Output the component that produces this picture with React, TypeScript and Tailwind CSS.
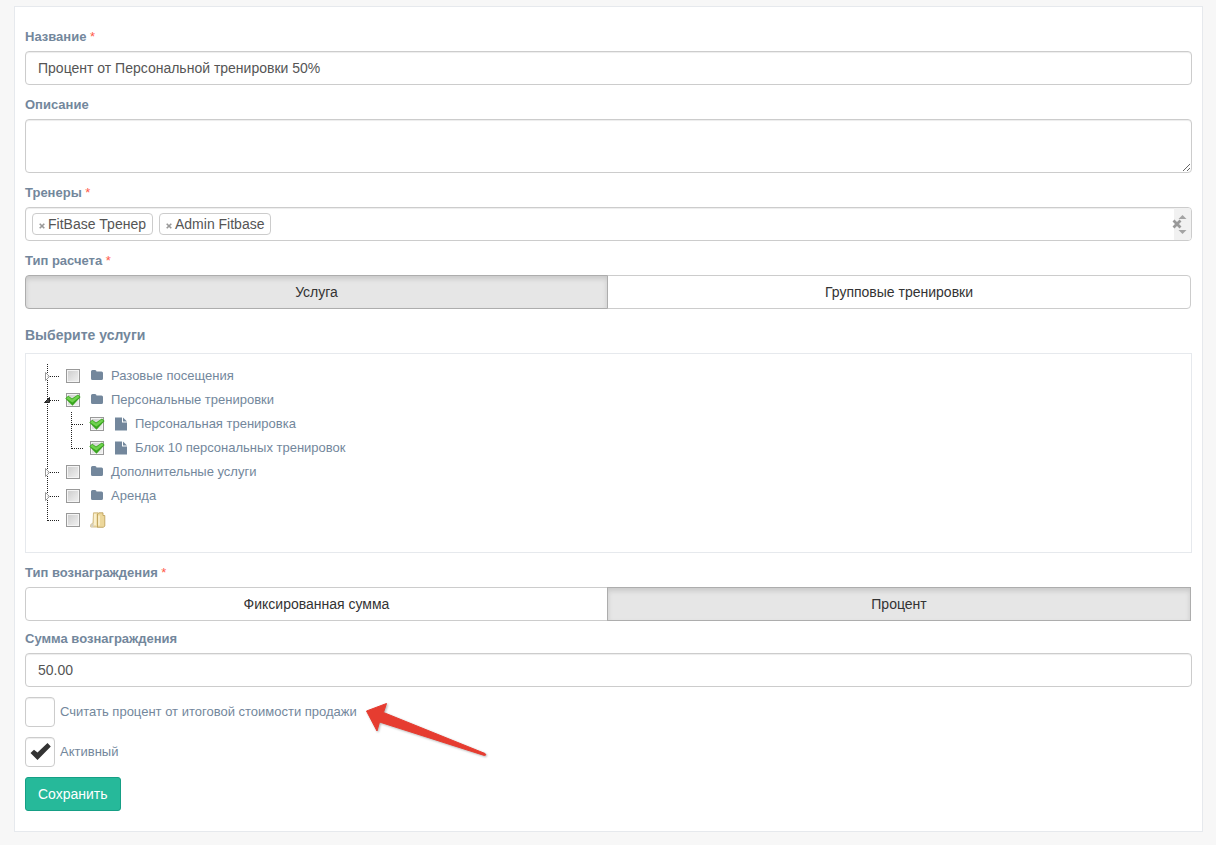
import React, { useState } from 'react';
import clsx from 'clsx';

type TreeNode = {
  id: string;
  title: string;
  icon: 'folder' | 'file' | 'folders';
  checked?: boolean;
  children?: TreeNode[];
  lazy?: boolean;
};

const services: TreeNode[] = [
  { id: 's1', title: 'Разовые посещения', icon: 'folder', lazy: true },
  {
    id: 's2',
    title: 'Персональные тренировки',
    icon: 'folder',
    checked: true,
    children: [
      { id: 's3', title: 'Персональная тренировка', icon: 'file', checked: true },
      { id: 's4', title: 'Блок 10 персональных тренировок', icon: 'file', checked: true },
    ],
  },
  { id: 's5', title: 'Дополнительные услуги', icon: 'folder', lazy: true },
  { id: 's6', title: 'Аренда', icon: 'folder', lazy: true },
  { id: 's7', title: '', icon: 'folders' },
];

const control =
  'block w-full rounded-[4px] border border-[#ccc] bg-white px-3 text-sm text-[#555] shadow-[inset_0_1px_1px_rgba(0,0,0,0.075)] outline-none';

const Label = ({ htmlFor, required, children }: { htmlFor?: string; required?: boolean; children: React.ReactNode }) => (
  <label htmlFor={htmlFor} className="mb-[5px] block text-[13px] leading-[19px] font-bold">
    {children}
    {required && <span className="font-normal text-[#ff5a4a]"> *</span>}
  </label>
);

const Toggle = ({ name, options, initial }: { name: string; options: string[]; initial: number }) => {
  const [active, setActive] = useState(initial);
  return (
    <div role="group" aria-label={name} className="mr-px flex">
      {options.map((option, i) => (
        <button
          key={option}
          type="button"
          aria-pressed={active === i}
          onClick={() => setActive(i)}
          className={clsx(
            'h-[34px] border text-sm text-[#333]',
            i === 0 ? 'w-1/2 rounded-l-[4px]' : '-ml-px flex-1',
            i === 1 && active !== i && 'rounded-r-[4px]',
            active === i
              ? 'relative border-[#adadad] bg-[#e6e6e6] shadow-[inset_0_3px_5px_rgba(0,0,0,0.125)]'
              : 'border-[#ccc] bg-white'
          )}
        >
          {option}
        </button>
      ))}
    </div>
  );
};

const Connector = ({ last, open, lazy }: { last: boolean; open: boolean; lazy?: boolean }) => (
  <svg width="24" height="24" viewBox="0 0 24 24" className="shrink-0" aria-hidden="true">
    <g stroke="#222" strokeDasharray="1 1" shapeRendering="crispEdges">
      <path d={last ? 'M11.5 0V13' : 'M11.5 0V24'} />
      <path d="M12 12.5H24" />
    </g>
    {lazy && <path d="M9.5 8.5V16.5L13.5 12.5Z" fill="#fff" fillOpacity=".8" stroke="#999" />}
    {open && <path d="M8.5 14.5H13.5V9.5Z" fill="#444" stroke="#222" />}
  </svg>
);

const NodeIcon = ({ icon }: { icon: TreeNode['icon'] }) => {
  if (icon === 'folder') {
    return (
      <svg width="14" height="14" viewBox="0 0 14 14" aria-hidden="true">
        <path d="M1 2.5Q1 1 2.500 1H5Q6.500 1 6.500 2.500H11.500Q13 2.500 13 4V9.500Q13 11 11.500 11H2.500Q1 11 1 9.500Z" fill="#73879c" />
      </svg>
    );
  }
  if (icon === 'file') {
    return (
      <svg width="14" height="14" viewBox="0 0 14 14" aria-hidden="true">
        <path d="M1 .5H8V5.500H13V13.500H1ZM9 .5L13 4.500H9Z" fill="#73879c" />
      </svg>
    );
  }
  return (
    <svg width="16" height="16" viewBox="0 0 16 16" aria-hidden="true">
      <path d="M3.500 .8H8V15H.8V12.500L3 11Z" fill="#f1e0ae" stroke="#c9b071" strokeWidth=".8" />
      <path d="M1 12.500L3.500 11V15H1Z" fill="#d5cfbf" />
      <path d="M7.500 2L9 .8H13V3.500H14.800V14L13.500 15.300H7.500Z" fill="#ecd79b" stroke="#b99a50" strokeWidth=".8" />
      <path d="M5 2V13M9 3.500V13.500" stroke="#fff8df" strokeWidth="1.200" />
    </svg>
  );
};

const TreeItem = ({ node, last }: { node: TreeNode; last: boolean }) => {
  const [checked, setChecked] = useState(!!node.checked);
  return (
    <li>
      <div className="flex h-6 items-center">
        <Connector last={last} open={!!node.children} lazy={node.lazy} />
        <label className="flex h-6 items-center pl-[6px]">
          <span className="relative size-[14px]">
            <input
              type="checkbox"
              aria-label={node.title || 'Без названия'}
              checked={checked}
              onChange={() => setChecked(!checked)}
              className="block size-[14px] appearance-none border border-[#999] bg-linear-to-br from-[#ccc] to-[#f2f2f2] shadow-[inset_0_0_0_1px_#f4f4f4]"
            />
            {checked && (
              <svg width="16" height="14" viewBox="0 0 16 14" className="pointer-events-none absolute top-0 -left-px" aria-hidden="true">
                <path d="M.3 5.500L3.200 2.800L7 5.600L13 1.500L15.600 4L7.500 12.800Z" fill="#3aa51f" />
                <path d="M1.300 5.500L3.300 3.600L7 6.600L13 2.300L14.400 4L7.400 9.600Z" fill="#6fd24e" />
              </svg>
            )}
          </span>
          <span className="ml-[10px] w-[21px]">
            <NodeIcon icon={node.icon} />
          </span>
          <span>{node.title}</span>
        </label>
      </div>
      {node.children && (
        <ul className="bg-[repeating-linear-gradient(to_bottom,#222_0_1px,transparent_1px_2px)] bg-[length:1px_100%] bg-[position:11px_0] bg-no-repeat pl-6">
          {node.children.map((child, i) => (
            <TreeItem key={child.id} node={child} last={i === node.children!.length - 1} />
          ))}
        </ul>
      )}
    </li>
  );
};

const CheckField = ({ label, initial }: { label: string; initial: boolean }) => {
  const [checked, setChecked] = useState(initial);
  return (
    <label className="flex w-fit items-center gap-[5px]">
      <span className="relative size-[30px]">
        <input
          type="checkbox"
          checked={checked}
          onChange={() => setChecked(!checked)}
          className="block size-[30px] appearance-none rounded-[4px] border border-[#ccc] bg-white shadow-[inset_0_1px_1px_rgba(0,0,0,0.075)]"
        />
        {checked && (
          <svg width="30" height="30" viewBox="0 0 30 30" className="pointer-events-none absolute inset-0" aria-hidden="true">
            <path d="M5.500 16L9 12.800L12.500 15.500L22.500 6L25.800 9.500L12.500 23Z" fill="#333" />
          </svg>
        )}
      </span>
      <span>{label}</span>
    </label>
  );
};

const App = () => {
  const [trainers, setTrainers] = useState(['FitBase Тренер', 'Admin Fitbase']);

  return (
    <div className="min-h-screen bg-[#f7f7f7] pt-[6px] pr-[13px] pb-[13px] pl-[14px] font-['Liberation_Sans',Arial,sans-serif] text-[13px] leading-[18px] text-[#73879c]">
      <form
        onSubmit={(e) => e.preventDefault()}
        className="flex flex-col border border-[#e6e9ed] bg-white px-[10px] py-5"
      >
        <div className="mb-[10px]">
          <Label htmlFor="name" required>Название</Label>
          <input id="name" type="text" defaultValue="Процент от Персональной тренировки 50%" className={clsx(control, 'h-[34px]')} />
        </div>

        <div className="mb-[10px]">
          <Label htmlFor="description">Описание</Label>
          <textarea id="description" className={clsx(control, 'h-[54px] resize-y')} />
        </div>

        <div className="mb-[10px]">
          <Label htmlFor="trainers" required>Тренеры</Label>
          <div className="flex h-[34px] items-center gap-[6px] rounded-[4px] border border-[#ccc] pl-[6px] text-sm text-[#555] shadow-[inset_0_1px_1px_rgba(0,0,0,0.075)]">
            {trainers.map((trainer) => (
              <span key={trainer} className="flex h-[22px] items-center gap-[3px] rounded-[4px] border border-[#ccc] bg-white px-[6px]">
                <button
                  type="button"
                  aria-label={`Удалить ${trainer}`}
                  onClick={() => setTrainers(trainers.filter((t) => t !== trainer))}
                  className="pt-[3px]"
                >
                  <svg width="6" height="6" viewBox="0 0 6 6" aria-hidden="true">
                    <path d="M.7 .7L5.300 5.300M5.300 .7L.7 5.300" stroke="#999" strokeWidth="1.600" />
                  </svg>
                </button>
                {trainer}
              </span>
            ))}
            <input id="trainers" type="text" className="h-6 min-w-0 flex-1 outline-none" />
            <button type="button" aria-label="Очистить" onClick={() => setTrainers([])} className="flex h-full w-[17px] items-center rounded-r-[3px] bg-[#f1f1f1]">
              <svg width="17" height="32" viewBox="0 0 17 32" className="overflow-visible" aria-hidden="true">
                <path d="M-.5 12.500L6.500 19.500M6.500 12.500L-.5 19.500" stroke="#999" strokeWidth="2.800" />
                <path d="M4.500 11L8.500 7L12.500 11ZM4.500 22L8.500 26L12.500 22Z" fill="#a3a3a3" />
              </svg>
            </button>
          </div>
        </div>

        <div className="mb-4">
          <Label required>Тип расчета</Label>
          <Toggle name="Тип расчета" options={['Услуга', 'Групповые тренировки']} initial={0} />
        </div>

        <h4 className="mb-2 text-sm leading-5 font-bold">Выберите услуги</h4>
        <ul className="mb-[10px] border border-[#e6e9ed] px-[10px] pt-[10px] pb-5">
          {services.map((node, i) => (
            <TreeItem key={node.id} node={node} last={i === services.length - 1} />
          ))}
        </ul>

        <div className="mb-2">
          <Label required>Тип вознаграждения</Label>
          <Toggle name="Тип вознаграждения" options={['Фиксированная сумма', 'Процент']} initial={1} />
        </div>

        <div className="mb-[10px]">
          <Label htmlFor="amount">Сумма вознаграждения</Label>
          <input id="amount" type="text" defaultValue="50.00" className={clsx(control, 'h-[34px]')} />
        </div>

        <div className="relative mb-[10px] w-fit">
          <CheckField label="Считать процент от итоговой стоимости продажи" initial={false} />
          {/* pointer to the new option */}
          <svg width="130" height="64" viewBox="0 0 130 64" className="pointer-events-none absolute top-0 left-full ml-1 drop-shadow-[1px_1px_1px_rgba(0,0,0,0.3)]" aria-hidden="true">
            <path d="M5.500 14L25.500 6.500L22.500 15.500L124 56.500Q126 58 123.500 58.500L18.500 25L16 34Z" fill="#e63c30" stroke="#e63c30" strokeLinejoin="round" />
          </svg>
        </div>

        <div className="mb-[10px]">
          <CheckField label="Активный" initial={true} />
        </div>

        <button type="submit" className="h-[34px] w-fit rounded-[3px] border border-[#169f85] bg-[#26b99a] px-3 text-sm text-white">
          Сохранить
        </button>
      </form>
    </div>
  );
};

export default App;
